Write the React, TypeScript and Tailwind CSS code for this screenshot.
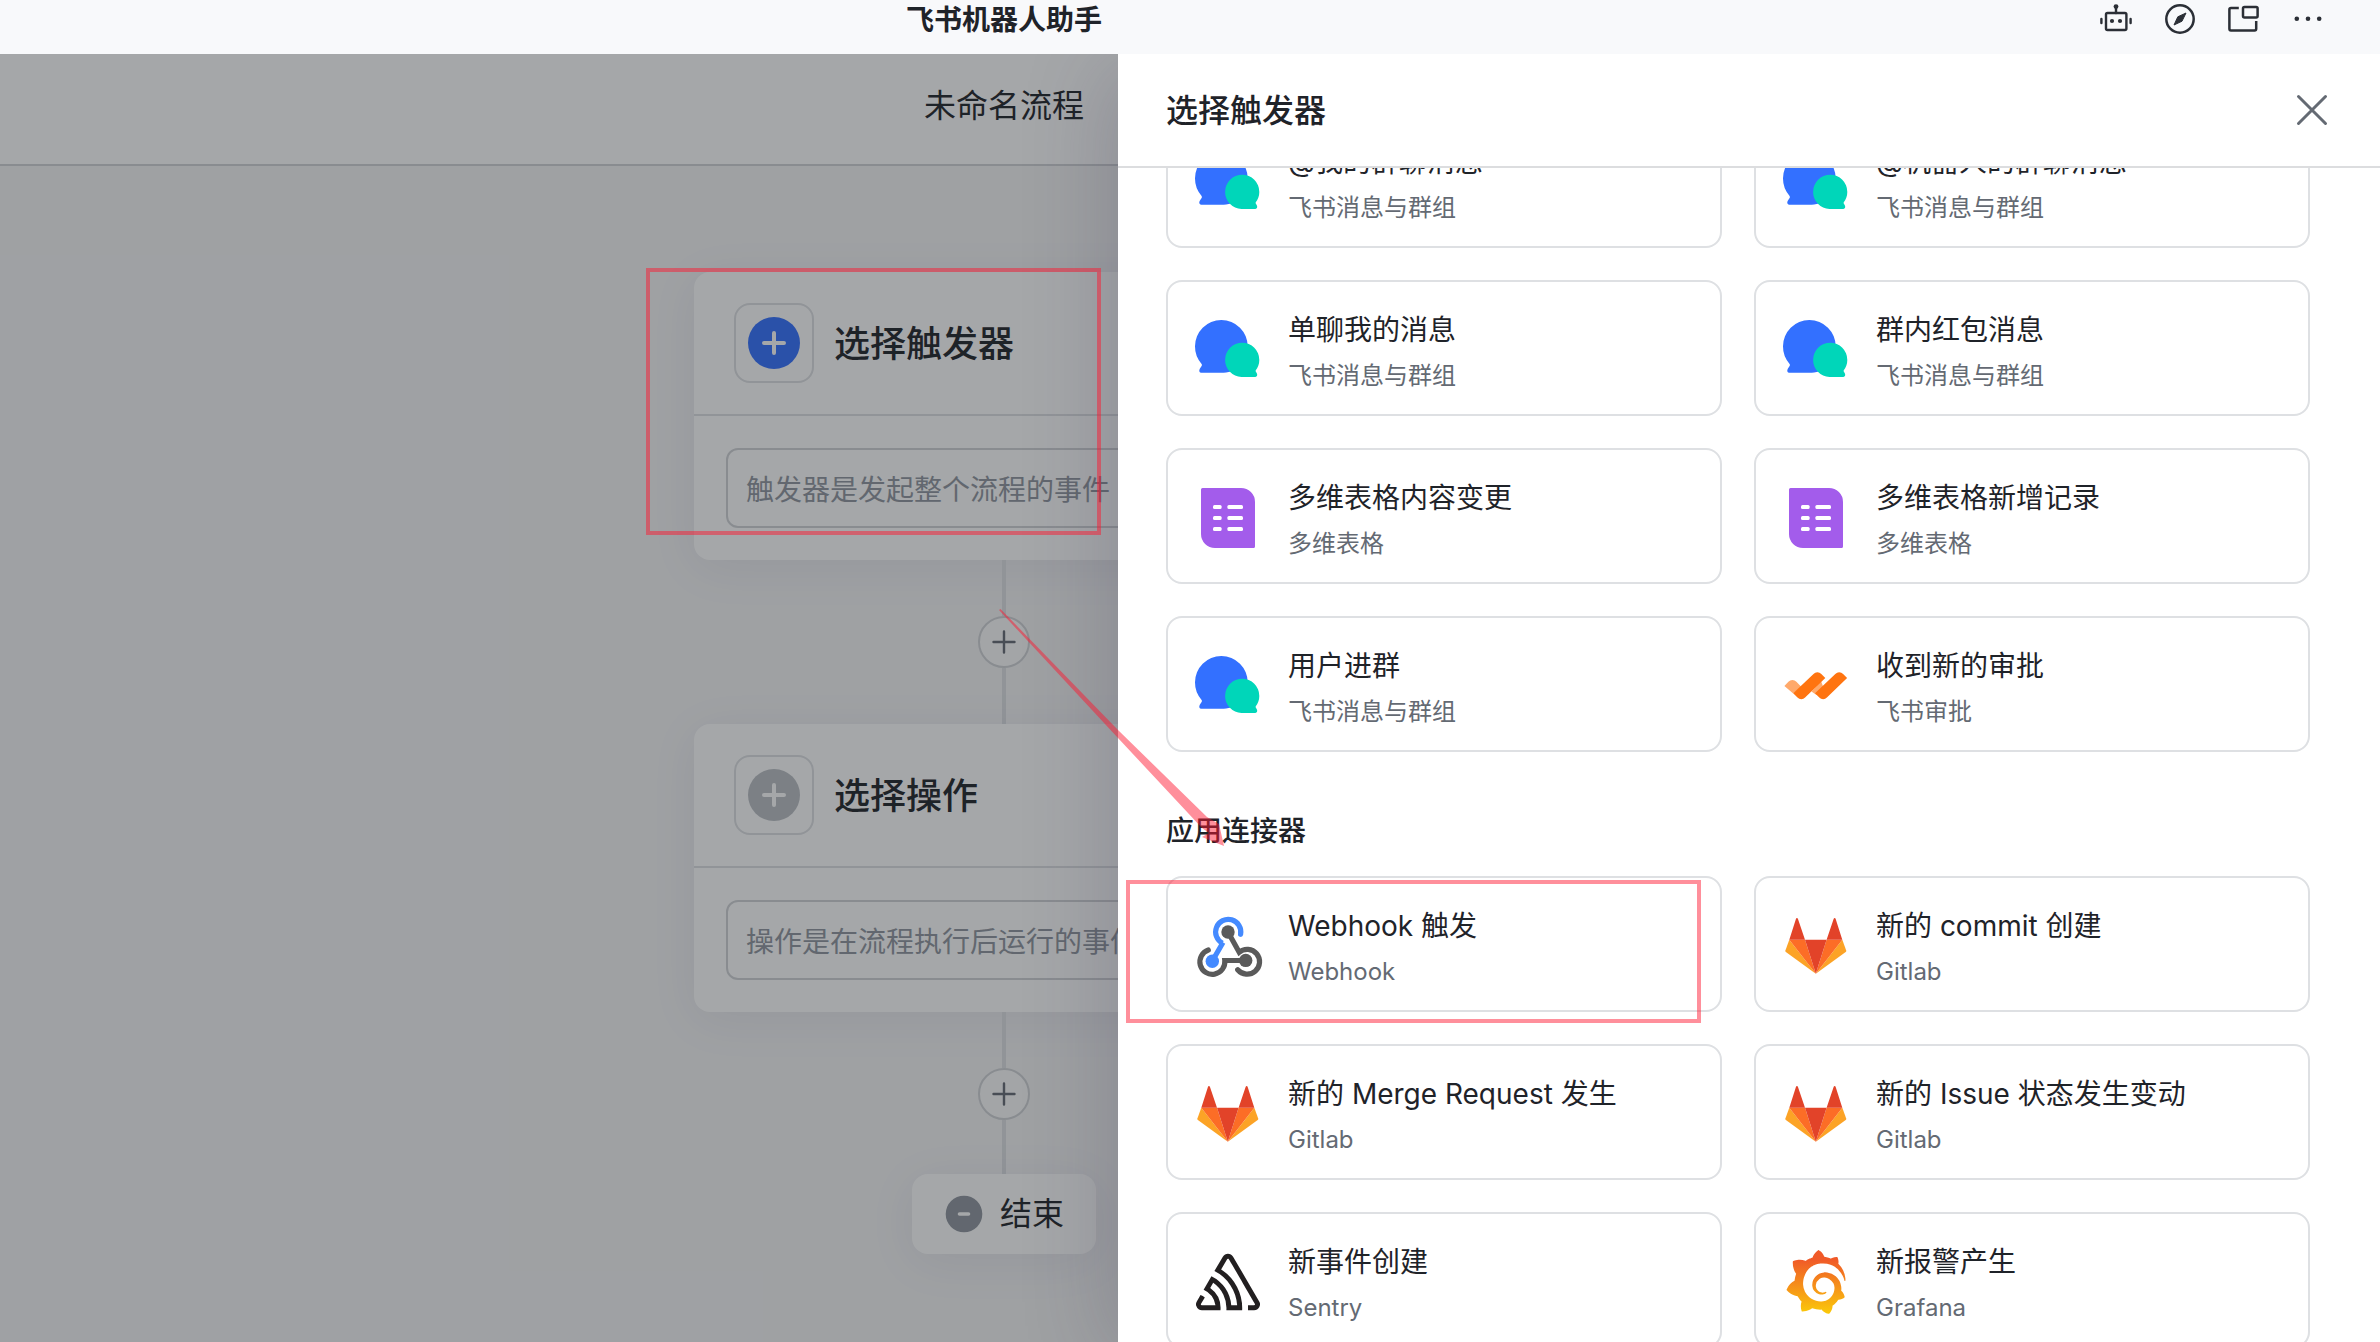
import type { ReactNode } from 'react'
import { SiGrafana, SiSentry } from 'react-icons/si'

function RobotIcon() {
  return (
    <svg viewBox="0 0 32 32" className="size-8" fill="none" stroke="currentColor" strokeWidth="2.4" strokeLinecap="round">
      <rect x="6" y="10" width="20.4" height="17" rx="1.5" />
      <path d="M16 4v6M1.4 16v4M30.6 16v4" />
      <circle cx="16" cy="3.6" r="2.4" fill="currentColor" stroke="none" />
      <circle cx="12" cy="18" r="2.1" fill="currentColor" stroke="none" />
      <circle cx="20" cy="18" r="2.1" fill="currentColor" stroke="none" />
    </svg>
  )
}

function CompassIcon() {
  return (
    <svg viewBox="0 0 32 32" className="size-8" fill="none" stroke="currentColor" strokeWidth="2.5">
      <circle cx="16" cy="16" r="13.7" />
      <path d="M22 10l-4 8.2L10 22l3.8-8.2z" fill="currentColor" strokeWidth="1" strokeLinejoin="round" />
    </svg>
  )
}

function WindowIcon() {
  return (
    <svg viewBox="0 0 32 32" className="size-8" fill="none" stroke="currentColor" strokeWidth="2.5">
      <path d="M10.8 5H3a1.6 1.6 0 0 0-1.6 1.6v19.2A1.6 1.6 0 0 0 3 27.4h23.6a1.6 1.6 0 0 0 1.6-1.6V18" />
      <rect x="15" y="4" width="14.6" height="10.4" rx="1.5" />
    </svg>
  )
}

function DotsIcon() {
  return (
    <svg viewBox="0 0 32 32" className="size-8" fill="currentColor">
      <circle cx="4.8" cy="15.7" r="2.3" />
      <circle cx="16" cy="15.7" r="2.3" />
      <circle cx="27.2" cy="15.7" r="2.3" />
    </svg>
  )
}

function ChatIcon() {
  return (
    <svg viewBox="0 0 64 64" className="size-16 overflow-visible">
      <path
        d="M25.3 2a26.3 26.3 0 0 1 26.4 26.3c0 14.6-10 26.4-24 26.4H5.3c-2 0-2.6-2.2-1.5-4l1.8-2.8c.5-.8.4-1.4-.2-2.2A26.3 26.3 0 0 1-1 28.3 26.3 26.3 0 0 1 25.3 2z"
        fill="#3370ff"
      />
      <path
        d="M46.2 24.8a17.1 17.1 0 0 1 17.1 17.1c0 4-1.3 7.5-3.5 10.3-.4.6-.3 1 .1 1.5l.9 1.6c.9 1.7.3 3.700-1.500 3.700H45.500A17.100 17.100 0 0 1 29.100 41.900a17.100 17.100 0 0 1 17.100-17.100z"
        fill="#00d6b9"
      />
    </svg>
  )
}

function BaseIcon() {
  return (
    <svg viewBox="0 0 64 64" className="size-16">
      <path d="M6.5 2H45a14 14 0 0 1 14 14v44.5a1.5 1.5 0 0 1-1.5 1.5H19A14 14 0 0 1 5 48V3.5A1.5 1.5 0 0 1 6.5 2z" fill="#a35ceb" />
      <g fill="#fff">
        <rect x="17" y="19" width="8.6" height="4" rx="1.5" />
        <rect x="31.4" y="19" width="15.6" height="4" rx="1.5" />
        <rect x="17" y="30" width="8.6" height="4" rx="1.5" />
        <rect x="31.4" y="30" width="15.6" height="4" rx="1.5" />
        <rect x="17" y="41" width="8.6" height="4" rx="1.5" />
        <rect x="31.4" y="41" width="15.6" height="4" rx="1.5" />
      </g>
    </svg>
  )
}

function ApprovalIcon() {
  return (
    <svg viewBox="0 0 64 64" className="size-16">
      <path d="M.4 32l4-4.3a5.500 5.500 0 0 1 8 0l5.100 5.300-8.300 6.500z" fill="#ffa96b" />
      <path d="M27.500 37.500l9.500-10.500 3 8-7.500 6z" fill="#ffa96b" />
      <path d="M9.200 39.300l20.300-19.400a5.500 5.500 0 0 1 7.800.1l4 4-20.200 19.600a5.200 5.200 0 0 1-7.600 0z" fill="#ff7410" />
      <path d="M31 39.300l20.300-19.400a5.500 5.500 0 0 1 7.800.1l4 4-20.200 19.600a5.200 5.200 0 0 1-7.600 0z" fill="#ff7410" />
    </svg>
  )
}

function WebhookIcon() {
  return (
    <svg viewBox="0 0 64 64" className="size-16 overflow-visible" fill="none" strokeWidth="5.2">
      <g stroke="#5a5a5a" strokeLinecap="round">
        <path d="M32 18l11.2 20.2A12.4 12.4 0 1 1 41.7 55.7" />
        <path d="M49.7 46.5H28.8A12.5 12.5 0 1 1 12.3 36" />
      </g>
      <path d="M44.6 20.3A12.6 12.6 0 1 0 26.5 29.2L27 28.5 16.3 47" stroke="#448aff" strokeLinecap="round" />
      <circle cx="32" cy="18" r="6.7" fill="#5a5a5a" />
      <circle cx="49.7" cy="46.4" r="6.7" fill="#5a5a5a" />
      <circle cx="16.3" cy="47.3" r="6.7" fill="#448aff" />
    </svg>
  )
}

function GitlabIcon() {
  return (
    <svg viewBox="0 0 64 64" className="size-16">
      <path d="M31.8 59.7L1.9 38a1.6 1.6 0 0 1-.5-1.6L5.3 25.7z" fill="#fca326" />
      <path d="M31.8 59.7L61.7 38a1.6 1.6 0 0 0 .5-1.6L58.3 25.7z" fill="#fca326" />
      <path d="M31.8 59.7L5.3 25.7H21zM31.8 59.7L58.3 25.7H42.6z" fill="#fc6d26" />
      <path d="M31.8 59.7L21 25.7h21.6z" fill="#e24329" />
      <path d="M5.3 25.7L12 4.7c.3-1 1.6-1 1.9 0L21 25.7zM58.3 25.7L51.6 4.7c-.3-1-1.6-1-1.9 0l-7.1 21z" fill="#e24329" />
    </svg>
  )
}

function SentryIcon() {
  return <SiSentry className="size-16 text-[#221f20]" />
}

function GrafanaIcon() {
  return (
    <span className="relative block size-16">
      <svg className="absolute size-0" aria-hidden="true">
        <defs>
          <linearGradient id="grafana-fill" x1="0" y1="0" x2="0" y2="1">
            <stop offset="0.15" stopColor="#f05a28" />
            <stop offset="1" stopColor="#fbca0a" />
          </linearGradient>
        </defs>
      </svg>
      <SiGrafana className="size-16" fill="url(#grafana-fill)" />
    </span>
  )
}

type Trigger = { title: string; app: string; icon: () => ReactNode }

const feishuTriggers: Trigger[] = [
  { title: '@我的群聊消息', app: '飞书消息与群组', icon: ChatIcon },
  { title: '@机器人的群聊消息', app: '飞书消息与群组', icon: ChatIcon },
  { title: '单聊我的消息', app: '飞书消息与群组', icon: ChatIcon },
  { title: '群内红包消息', app: '飞书消息与群组', icon: ChatIcon },
  { title: '多维表格内容变更', app: '多维表格', icon: BaseIcon },
  { title: '多维表格新增记录', app: '多维表格', icon: BaseIcon },
  { title: '用户进群', app: '飞书消息与群组', icon: ChatIcon },
  { title: '收到新的审批', app: '飞书审批', icon: ApprovalIcon },
]

const connectorTriggers: Trigger[] = [
  { title: 'Webhook 触发', app: 'Webhook', icon: WebhookIcon },
  { title: '新的 commit 创建', app: 'Gitlab', icon: GitlabIcon },
  { title: '新的 Merge Request 发生', app: 'Gitlab', icon: GitlabIcon },
  { title: '新的 Issue 状态发生变动', app: 'Gitlab', icon: GitlabIcon },
  { title: '新事件创建', app: 'Sentry', icon: SentryIcon },
  { title: '新报警产生', app: 'Grafana', icon: GrafanaIcon },
]

function TriggerGrid({ items }: { items: Trigger[] }) {
  return (
    <div className="grid grid-cols-2 gap-8">
      {items.map(({ title, app, icon: Icon }) => (
        <button
          key={title}
          type="button"
          className="flex h-[136px] items-center gap-7 rounded-2xl border-2 border-[#dee0e3] bg-white px-7 pt-1 text-left"
        >
          <span className="shrink-0">
            <Icon />
          </span>
          <span className="flex min-w-0 flex-col gap-2 pt-[3px]">
            <span className="truncate text-[28px] leading-10 text-[#1f2329]">{title}</span>
            <span className="truncate text-2xl leading-9 text-[#646a73]">{app}</span>
          </span>
        </button>
      ))}
    </div>
  )
}

function StepCard({ id, title, placeholder, active }: { id: string; title: string; placeholder: string; active?: boolean }) {
  return (
    <section className="w-[620px] rounded-2xl bg-white shadow-[0_8px_48px_rgba(31,35,80,0.07)]">
      <div className="flex items-center gap-5 border-b-2 border-[#dee0e3] px-10 py-[31px]">
        <button
          type="button"
          aria-label={title}
          className="flex size-20 items-center justify-center rounded-2xl border-2 border-[#dee0e3]"
        >
          <svg viewBox="0 0 52 52" className={active ? 'size-[52px] text-[#3370ff]' : 'size-[52px] text-[#bbbfc4]'}>
            <circle cx="26" cy="26" r="26" fill="currentColor" />
            <path d="M26 16v20M16 26h20" stroke="#fff" strokeWidth="4" strokeLinecap="round" />
          </svg>
        </button>
        <label htmlFor={id} className="pt-0.5 text-4xl font-medium text-[#1f2329]">
          {title}
        </label>
      </div>
      <div className="p-8">
        <input
          id={id}
          readOnly
          placeholder={placeholder}
          className="h-20 w-full rounded-xl border-2 border-[#d0d3d6] bg-white px-[18px] pt-[3px] text-[28px] placeholder:text-[#8f959e]"
        />
      </div>
    </section>
  )
}

function AddConnector() {
  return (
    <div className="flex flex-col items-center">
      <div className="h-14 w-1 bg-[#dee0e3]" />
      <button
        type="button"
        aria-label="添加步骤"
        className="flex size-[52px] items-center justify-center rounded-full border-2 border-[#d0d3d6] bg-[#fcfcfc] text-[#646a73]"
      >
        <svg viewBox="0 0 24 24" className="size-6" stroke="currentColor" strokeWidth="2.4" strokeLinecap="round">
          <path d="M12 1.5v21M1.5 12h21" />
        </svg>
      </button>
      <div className="h-14 w-1 bg-[#dee0e3]" />
    </div>
  )
}

export default function App() {
  return (
    <div className="relative flex h-screen flex-col overflow-hidden bg-[#f5f5f6] font-['Inter','Noto_Sans_CJK_SC',sans-serif] text-[#1f2329]">
      <header className="flex h-[54px] shrink-0 items-start bg-[#f8f9fb] pt-[3px] pr-14">
        <h1 className="flex-1 text-center text-[28px] leading-[34px] font-bold">飞书机器人助手</h1>
        <nav className="flex w-[316px] justify-end gap-8 text-[#2b2f36]">
          <button type="button" aria-label="机器人"><RobotIcon /></button>
          <button type="button" aria-label="浏览"><CompassIcon /></button>
          <button type="button" aria-label="新窗口"><WindowIcon /></button>
          <button type="button" aria-label="更多"><DotsIcon /></button>
        </nav>
      </header>

      <div className="relative min-h-0 flex-1 overflow-hidden">
        <main className="flex h-full flex-col">
          <div className="flex h-28 shrink-0 items-center justify-center border-b-2 border-[#d0d3d6] bg-white pr-[372px] pb-1.5">
            <h2 className="text-[32px] leading-10">未命名流程</h2>
          </div>
          <div className="flex flex-col items-center pt-[106px] pr-[372px]">
            <StepCard id="trigger" title="选择触发器" placeholder="触发器是发起整个流程的事件" active />
            <AddConnector />
            <StepCard id="action" title="选择操作" placeholder="操作是在流程执行后运行的事件" />
            <AddConnector />
            <div className="-mt-0.5 flex h-20 items-center gap-4 rounded-2xl bg-white px-8 shadow-[0_8px_48px_rgba(31,35,80,0.07)]">
              <svg viewBox="0 0 40 40" className="size-10">
                <circle cx="20" cy="20" r="18.3" fill="#8f959e" />
                <path d="M15.5 20h9" stroke="#fff" strokeWidth="3.6" strokeLinecap="round" />
              </svg>
              <span className="text-[32px] leading-10">结束</span>
            </div>
          </div>
        </main>

        <div className="absolute inset-0 bg-[#1f2329]/40" />

        <aside
          aria-label="选择触发器"
          className="absolute inset-y-0 right-0 flex w-[1262px] flex-col bg-white shadow-[-12px_12px_80px_rgba(50,45,75,0.2)]"
        >
          <div className="flex h-[114px] shrink-0 items-center justify-between border-b-2 border-[#dcdddf] pr-[51px] pl-12">
            <h2 className="pt-0.5 text-[32px] leading-10 font-medium">选择触发器</h2>
            <button type="button" aria-label="关闭" className="text-[#646a73]">
              <svg viewBox="0 0 34 34" className="size-[34px]" stroke="currentColor" strokeWidth="3" strokeLinecap="round">
                <path d="M3.5 3.5l27 27M30.5 3.5l-27 27" />
              </svg>
            </button>
          </div>
          <div className="min-h-0 flex-1 overflow-hidden pr-[70px] pl-12">
            <div className="-mt-14">
              <TriggerGrid items={feishuTriggers} />
              <h3 className="pt-[59px] pb-[25px] text-[28px] leading-10 font-medium">应用连接器</h3>
              <TriggerGrid items={connectorTriggers} />
            </div>
          </div>
        </aside>
      </div>

      <div className="pointer-events-none absolute top-[268px] left-[646px] h-[267px] w-[455px] border-4 border-[#ff142d]/48" />
      <div className="pointer-events-none absolute top-[880px] left-[1126px] h-[143px] w-[575px] border-4 border-[#ff142d]/48" />
      <svg
        viewBox="0 0 226 238"
        className="pointer-events-none absolute top-[609px] left-[999px] h-[238px] w-[226px] fill-[#ff142d]/48"
      >
        <path d="M0 1L1.5 0 119 121 208 208 220 215 225 237 203 228 210 224 203 219 119 129z" />
      </svg>
    </div>
  )
}
